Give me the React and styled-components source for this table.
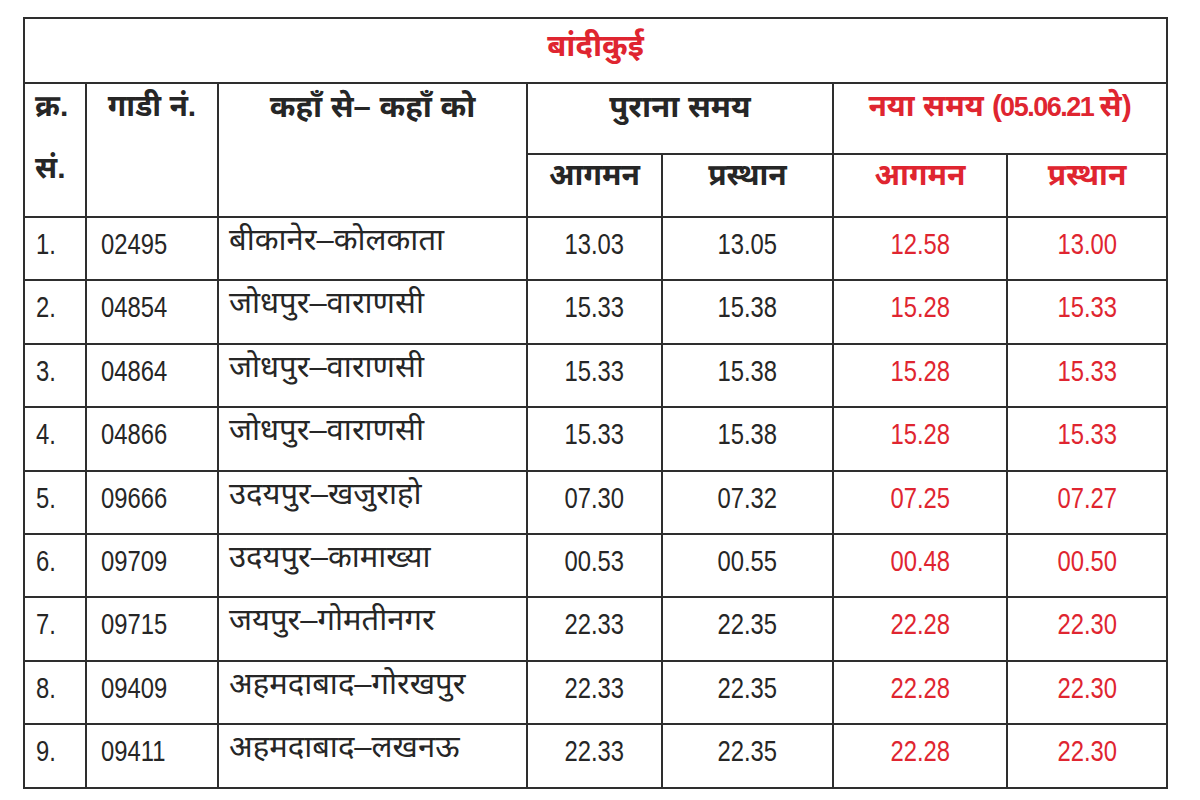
import React from "react";
import styled, { createGlobalStyle } from "styled-components";

const Global = createGlobalStyle`
  html, body { margin: 0; padding: 0; background: #ffffff; }
  body { font-family: "Liberation Sans", "Noto Sans Devanagari", "Lohit Devanagari", "Noto Sans", sans-serif; }
`;

const Page = styled.div`
  width: 1200px;
  height: 800px;
  box-sizing: border-box;
  padding: 17px 34px 0 23px;
  background: #fff;
`;

const Table = styled.table`
  border-collapse: collapse;
  width: 1143px;
  table-layout: fixed;
  color: #262626;
`;

const Cell = styled.td`
  border: 2px solid #2e2e2e;
  padding: ${(p) => (p.$pad ? p.$pad : "0 0 0 12px")};
  vertical-align: top;
  text-align: ${(p) => p.$align || "left"};
  color: ${(p) => (p.$red ? "#df2530" : "#262626")};
  font-size: ${(p) => p.$size || "31px"};
  font-weight: ${(p) => (p.$bold ? 700 : 400)};
  height: ${(p) => p.$h || "63.4px"};
  line-height: 1.2;
  box-sizing: border-box;
  white-space: nowrap;
`;

const TitleCell = styled(Cell)`
  text-align: center;
  vertical-align: middle;
  padding: 0 0 10px 0;
`;

const Num = styled.span`
  display: inline-block;
  font-size: 29px;
  transform: scaleX(0.82);
  transform-origin: ${(p) => (p.$left ? "left center" : "center center")};
  color: inherit;
`;

const HeadNum = styled.span`
  display: inline-block;
  font-size: 27px;
  letter-spacing: -1.5px;
  margin: 0 -2px;
`;

const Stack = styled.div`
  display: flex;
  flex-direction: column;
  gap: 26px;
`;

const rows = [
  ["1.", "02495", "बीकानेर–कोलकाता", "13.03", "13.05", "12.58", "13.00"],
  ["2.", "04854", "जोधपुर–वाराणसी", "15.33", "15.38", "15.28", "15.33"],
  ["3.", "04864", "जोधपुर–वाराणसी", "15.33", "15.38", "15.28", "15.33"],
  ["4.", "04866", "जोधपुर–वाराणसी", "15.33", "15.38", "15.28", "15.33"],
  ["5.", "09666", "उदयपुर–खजुराहो", "07.30", "07.32", "07.25", "07.27"],
  ["6.", "09709", "उदयपुर–कामाख्या", "00.53", "00.55", "00.48", "00.50"],
  ["7.", "09715", "जयपुर–गोमतीनगर", "22.33", "22.35", "22.28", "22.30"],
  ["8.", "09409", "अहमदाबाद–गोरखपुर", "22.33", "22.35", "22.28", "22.30"],
  ["9.", "09411", "अहमदाबाद–लखनऊ", "22.33", "22.35", "22.28", "22.30"],
];

const widths = [62, 132, 309, 135, 171, 174, 160];

export default function App() {
  return (
    <>
      <Global />
      <Page>
        <Table>
          <colgroup>
            {widths.map((w, i) => (
              <col key={i} style={{ width: w }} />
            ))}
          </colgroup>
          <tbody>
            <tr>
              <TitleCell colSpan={7} $red $bold $h="65px" $size="31px">
                बांदीकुई
              </TitleCell>
            </tr>
            <tr>
              <Cell rowSpan={2} $bold $pad="4px 0 0 10px" $size="30px">
                <Stack>
                  <span>क्र.</span>
                  <span>सं.</span>
                </Stack>
              </Cell>
              <Cell rowSpan={2} $bold $align="center" $pad="4px 0 0 0" $size="30px">
                गाडी नं.
              </Cell>
              <Cell rowSpan={2} $bold $align="center" $pad="4px 0 0 0" $size="31px">
                कहाँ से– कहाँ को
              </Cell>
              <Cell colSpan={2} $bold $align="center" $pad="4px 0 0 0" $h="71px" $size="31px">
                पुराना समय
              </Cell>
              <Cell colSpan={2} $bold $red $align="center" $pad="4px 0 0 0" $h="71px" $size="30px">
                नया समय (<HeadNum>05.06.21</HeadNum> से)
              </Cell>
            </tr>
            <tr>
              <Cell $bold $align="center" $pad="2px 0 0 0" $h="63px" $size="30px">आगमन</Cell>
              <Cell $bold $align="center" $pad="2px 0 0 0" $h="63px" $size="30px">प्रस्थान</Cell>
              <Cell $bold $red $align="center" $pad="2px 0 0 0" $h="63px" $size="30px">आगमन</Cell>
              <Cell $bold $red $align="center" $pad="2px 0 0 0" $h="63px" $size="30px">प्रस्थान</Cell>
            </tr>
            {rows.map((r) => (
              <tr key={r[0]}>
                <Cell $pad="7px 0 0 11px"><Num $left>{r[0]}</Num></Cell>
                <Cell $pad="7px 0 0 14px"><Num $left>{r[1]}</Num></Cell>
                <Cell $pad="3px 0 0 10px">{r[2]}</Cell>
                <Cell $align="center" $pad="7px 0 0 0"><Num>{r[3]}</Num></Cell>
                <Cell $align="center" $pad="7px 0 0 0"><Num>{r[4]}</Num></Cell>
                <Cell $align="center" $red $pad="7px 0 0 0"><Num>{r[5]}</Num></Cell>
                <Cell $align="center" $red $pad="7px 0 0 0"><Num>{r[6]}</Num></Cell>
              </tr>
            ))}
          </tbody>
        </Table>
      </Page>
    </>
  );
}
